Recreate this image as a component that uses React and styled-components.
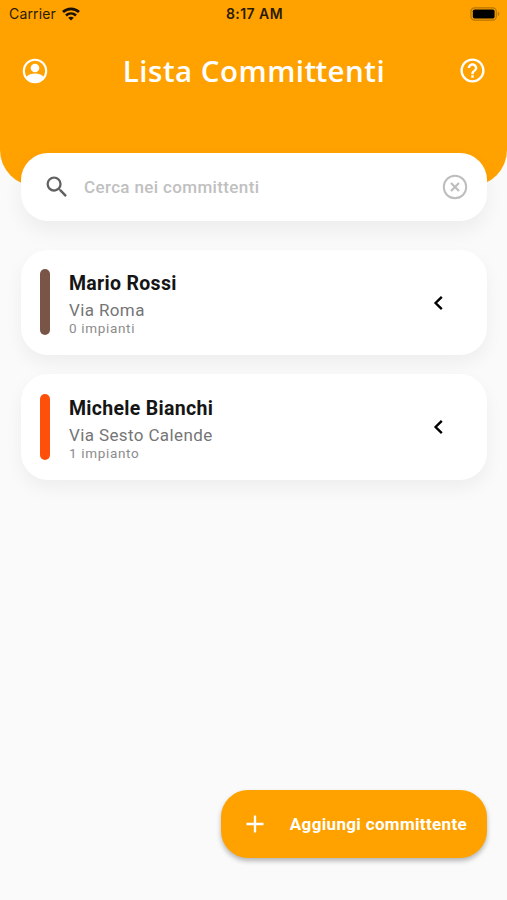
import React from 'react';
import styled, { createGlobalStyle } from 'styled-components';
import { MdHelpOutline, MdSearch } from 'react-icons/md';

const GlobalStyle = createGlobalStyle`
  * { box-sizing: border-box; }
  body { margin: 0; background: #fafafa; }
  button { border: 0; padding: 0; background: none; color: inherit; font: inherit; }
  svg { display: block; flex: none; }
`;

const Screen = styled.div`
  display: flex;
  flex-direction: column;
  width: 507px;
  height: 900px;
  overflow: hidden;
  background: #fafafa;
  font-family: Roboto, sans-serif;
`;

const Header = styled.header`
  flex: none;
  height: 186px;
  background: #ffa200;
  border-radius: 0 0 36px 36px;
`;

const StatusBar = styled.div`
  display: grid;
  grid-template-columns: 1fr auto 1fr;
  align-items: center;
  height: 27px;
  padding: 0 7px 0 9px;
  font: 400 14px/27px Inter, sans-serif;
  color: #2b1b00;
`;

const Carrier = styled.div`
  display: flex;
  align-items: center;
  gap: 6px;
  letter-spacing: 0.15px;
`;

const Clock = styled.div`
  font-weight: 600;
  letter-spacing: 0.45px;
`;

const BatterySlot = styled.div`
  display: flex;
  justify-content: flex-end;
`;

const TitleBar = styled.div`
  display: flex;
  align-items: center;
  justify-content: space-between;
  height: 87px;
  padding: 0 20px;
  color: #fff;
`;

const IconButton = styled.button`
  display: flex;
`;

const Title = styled.h1`
  margin: 0;
  font: 650 29.5px/40px "Open Sans", sans-serif;
  letter-spacing: 0.5px;
  white-space: nowrap;
`;

const JoinedLetter = styled.span`
  letter-spacing: -0.9px;
`;

const SearchBox = styled.label`
  flex: none;
  display: flex;
  align-items: center;
  height: 68px;
  margin: -33.5px 20px 0 21px;
  padding: 0 18px 0 22px;
  border-radius: 27px;
  background: #fff;
  box-shadow: 0 10px 20px rgba(0, 0, 0, 0.055);
  color: #616161;
`;

const SearchInput = styled.input`
  flex: 1;
  min-width: 0;
  margin: 1px 0 0 13px;
  padding: 0;
  border: 0;
  outline: 0;
  background: transparent;
  font: 500 17px/24px Roboto, sans-serif;
  letter-spacing: 0.36px;
  &::placeholder { color: #c0c0c0; opacity: 1; }
`;

const ClientList = styled.main`
  display: flex;
  flex-direction: column;
  gap: 19px;
  padding: 29px 20px 0 21px;
`;

const ClientCard = styled.article`
  display: flex;
  align-items: center;
  height: 105.8px;
  padding: 0 42px 0 19px;
  border-radius: 27px;
  background: #fff;
  box-shadow: 0 8px 18px rgba(0, 0, 0, 0.05);
`;

const ColorBar = styled.div`
  width: 10px;
  height: 66px;
  border-radius: 5px;
  background: ${({ $color }) => $color};
`;

const Details = styled.div`
  flex: 1;
  margin: 1px 0 0 19px;
  white-space: nowrap;
`;

const Name = styled.h2`
  margin: 0;
  font-weight: 700;
  font-size: 19.5px;
  line-height: 28px;
  letter-spacing: 0.3px;
  color: #151515;
`;

const Address = styled.div`
  font-size: 17px;
  line-height: 24px;
  letter-spacing: 0.38px;
  color: #757575;
`;

const Count = styled.div`
  font-size: 13.5px;
  line-height: 13px;
  letter-spacing: 0.67px;
  color: #8c8c8c;
`;

const ChevronButton = styled(IconButton)`
  margin-top: 0.5px;
`;

const Footer = styled.footer`
  display: flex;
  justify-content: flex-end;
  margin: auto 20px 42px;
`;

const AddButton = styled.button`
  display: flex;
  align-items: center;
  justify-content: space-between;
  width: 266px;
  height: 68px;
  padding: 0 20px 0 25px;
  border-radius: 27px;
  background: #ffa200;
  box-shadow: 0 3px 5px rgba(0, 0, 0, 0.28);
  color: #fff;
  font: 700 17px/24px Roboto, sans-serif;
  letter-spacing: 0.34px;
  white-space: nowrap;
`;

const WifiIcon = () => (
  <svg width="18" height="14" viewBox="0 0 18 14" fill="none" stroke="#1b1100" strokeWidth="2.7">
    <path d="M1 5C5.5.7 12.5.7 17 5" />
    <path d="M4 8.5c2.9-2.7 7.1-2.7 10 0" />
    <path d="M9 13.5 6.2 10.8c1.6-1.5 4-1.5 5.6 0Z" fill="#1b1100" stroke="none" />
  </svg>
);

const BatteryIcon = () => (
  <svg width="30" height="14" viewBox="0 0 30 14">
    <rect x=".9" y=".9" width="25.4" height="12.2" rx="3.6" fill="none" stroke="#b87500" strokeWidth="1.2" />
    <rect x="2.8" y="2.5" width="21.8" height="9" rx="1.8" fill="#000" />
    <path d="M27.8 4.8c2 .6 2 3.8 0 4.4Z" fill="#b87500" />
  </svg>
);

const AccountIcon = () => (
  <svg width="30" height="30" viewBox="0 0 30 30">
    <circle cx="15" cy="15" r="11.2" fill="none" stroke="#fff" strokeWidth="2.1" />
    <circle cx="15" cy="12" r="4.3" fill="#fff" />
    <path d="M6.1 21.2C8.2 18.6 11.7 17.5 15 17.5s6.8 1.1 8.9 3.7A11.3 11.3 0 0 1 6.1 21.2Z" fill="#fff" />
  </svg>
);

const ClearIcon = () => (
  <svg width="28" height="28" viewBox="0 0 28 28" fill="none" stroke="#bdbdbd" strokeWidth="2">
    <circle cx="14" cy="14" r="11.2" />
    <path d="m10 10 8 8m0-8-8 8" strokeWidth="2.2" />
  </svg>
);

const ChevronIcon = () => (
  <svg width="12" height="16" viewBox="0 0 12 16" fill="none" stroke="#000" strokeWidth="2.4">
    <path d="M8.8 1.8 2.6 8l6.2 6.2" />
  </svg>
);

const PlusIcon = () => (
  <svg width="18" height="18" viewBox="0 0 18 18" stroke="#fff" strokeWidth="2.3">
    <path d="M9 .5v17M.5 9h17" />
  </svg>
);

const clients = [
  { name: 'Mario Rossi', address: 'Via Roma', count: '0 impianti', color: '#795548' },
  { name: 'Michele Bianchi', address: 'Via Sesto Calende', count: '1 impianto', color: '#ff500a' },
];

export default function App() {
  return (
    <Screen>
      <GlobalStyle />
      <Header>
        <StatusBar>
          <Carrier>Carrier <WifiIcon /></Carrier>
          <Clock>8:17 AM</Clock>
          <BatterySlot><BatteryIcon /></BatterySlot>
        </StatusBar>
        <TitleBar>
          <IconButton aria-label="Profilo"><AccountIcon /></IconButton>
          <Title>Lista Commi<JoinedLetter>t</JoinedLetter>tenti</Title>
          <IconButton aria-label="Aiuto"><MdHelpOutline size={29} /></IconButton>
        </TitleBar>
      </Header>
      <SearchBox>
        <MdSearch size={28} />
        <SearchInput placeholder="Cerca nei committenti" />
        <IconButton aria-label="Cancella"><ClearIcon /></IconButton>
      </SearchBox>
      <ClientList>
        {clients.map((client) => (
          <ClientCard key={client.name}>
            <ColorBar $color={client.color} />
            <Details>
              <Name>{client.name}</Name>
              <Address>{client.address}</Address>
              <Count>{client.count}</Count>
            </Details>
            <ChevronButton aria-label="Apri"><ChevronIcon /></ChevronButton>
          </ClientCard>
        ))}
      </ClientList>
      <Footer>
        <AddButton><PlusIcon />Aggiungi committente</AddButton>
      </Footer>
    </Screen>
  );
}
